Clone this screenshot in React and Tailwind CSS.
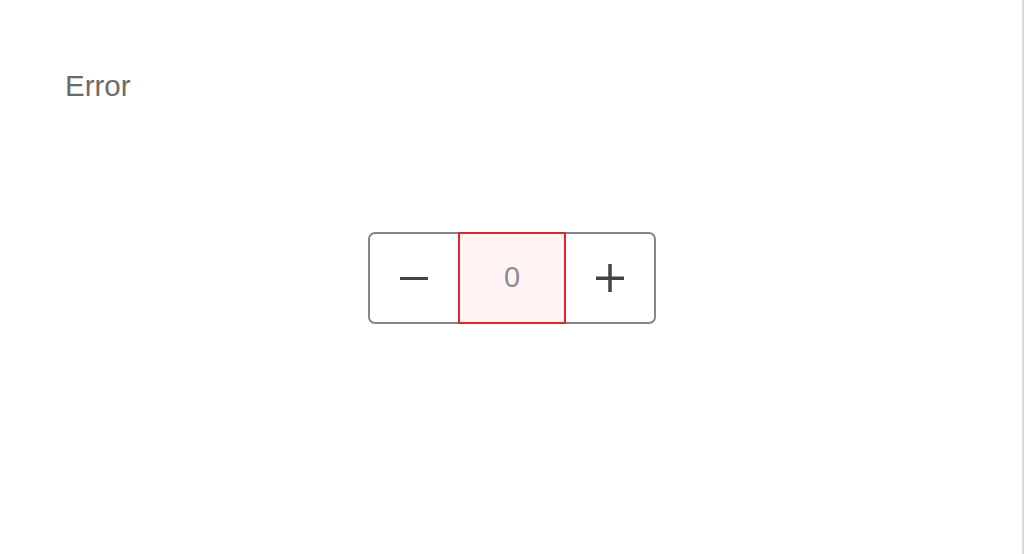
export default function App() {
  return (
    <div className="flex h-[554px] w-full bg-white" style={{ fontFamily: '"Liberation Sans", Arial, sans-serif' }}>
      <div className="flex-1 pl-[65px] pt-[68px]">
        <div className="text-[29.5px] leading-[35px] text-[#6b6b6e]">Error</div>
        <div className="mt-[129px] flex justify-center pr-[63px]">
          <div className="flex h-[92px] w-[288px] rounded-[7px] border-2 border-[#86868a] bg-white">
            <button className="flex w-[88px] items-center justify-center">
              <span className="block h-[3px] w-[28px] bg-[#444447]" />
            </button>
            <div className="-my-[2px] flex w-[108px] items-center justify-center border-2 border-[#e0262e] bg-[#fff4f3] text-[29px] text-[#8c8c90]">
              0
            </div>
            <button className="flex flex-1 items-center justify-center">
              <svg width="28" height="28" viewBox="0 0 28 28">
                <rect x="0" y="12.5" width="28" height="3.5" fill="#444447" />
                <rect x="12.25" y="0" width="3.5" height="28" fill="#444447" />
              </svg>
            </button>
          </div>
        </div>
      </div>
      <div className="w-[2px] bg-[#dcdcdc]" />
    </div>
  );
}
